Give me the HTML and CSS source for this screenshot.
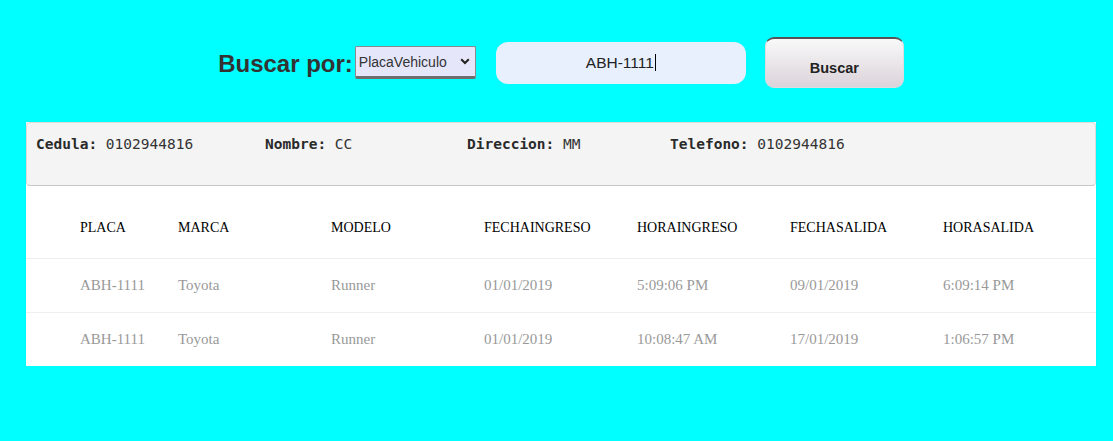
FILE: index.html
```html
<!DOCTYPE html>
<html lang="es">
<head>
<meta charset="utf-8">
<title>Buscar vehículos</title>
<link rel="stylesheet" href="styles.css">
</head>
<body>
<div class="page">
  <form class="search-bar">
    <label class="search-label" for="criterio">Buscar por:</label>
    <div class="select-wrap">
      <select id="criterio" class="search-select">
        <option>PlacaVehiculo</option>
      </select>
      <svg class="select-chevron" width="10" height="7" viewBox="0 0 10 7" aria-hidden="true">
        <path d="M1.2 1.2 L5 5 L8.8 1.2" fill="none" stroke="#222" stroke-width="2"/>
      </svg>
    </div>
    <div class="search-field"><span class="search-value">ABH-1111</span></div>
    <button type="button" class="search-button">Buscar</button>
  </form>

  <section class="result">
    <div class="owner">
      <div class="owner-item"><b>Cedula:</b> 0102944816</div>
      <div class="owner-item"><b>Nombre:</b> CC</div>
      <div class="owner-item"><b>Direccion:</b> MM</div>
      <div class="owner-item"><b>Telefono:</b> 0102944816</div>
    </div>
    <div class="table">
      <div class="row head">
        <div>PLACA</div><div>MARCA</div><div>MODELO</div><div>FECHAINGRESO</div><div>HORAINGRESO</div><div>FECHASALIDA</div><div>HORASALIDA</div>
      </div>
      <div class="row body">
        <div>ABH-1111</div><div>Toyota</div><div>Runner</div><div>01/01/2019</div><div>5:09:06 PM</div><div>09/01/2019</div><div>6:09:14 PM</div>
      </div>
      <div class="row body">
        <div>ABH-1111</div><div>Toyota</div><div>Runner</div><div>01/01/2019</div><div>10:08:47 AM</div><div>17/01/2019</div><div>1:06:57 PM</div>
      </div>
    </div>
  </section>
</div>
</body>
</html>
```

FILE: styles.css
```css
html, body {
  margin: 0;
  padding: 0;
  background: #00ffff;
}

.page {
  padding: 37px 17px 0 26px;
}

.search-bar {
  display: flex;
  justify-content: center;
  align-items: center;
  margin: 0;
  height: 51px;
}

.search-label {
  font-family: "Liberation Sans", Arial, sans-serif;
  font-weight: bold;
  font-size: 24px;
  color: #333;
  margin-right: 2px;
  position: relative;
  top: 1px;
}

.select-wrap {
  position: relative;
  margin-right: 20px;
}

.search-select {
  -webkit-appearance: none;
  appearance: none;
  box-sizing: border-box;
  width: 121px;
  height: 33px;
  margin: 0;
  padding: 0 0 0 3px;
  background: #e6e6fa;
  border: 1px solid #8a8a8a;
  border-bottom: 3px solid #6e6e6e;
  border-radius: 2px;
  font-family: "Liberation Sans", Arial, sans-serif;
  font-size: 14px;
  color: #333;
  display: block;
}

.select-chevron {
  position: absolute;
  right: 6px;
  top: 12px;
  pointer-events: none;
}

.search-field {
  box-sizing: border-box;
  width: 250px;
  height: 42px;
  background: #e8f0fe;
  border-radius: 12px;
  display: flex;
  align-items: center;
  justify-content: center;
  margin-right: 19px;
}

.search-value {
  font-family: "Liberation Sans", Arial, sans-serif;
  font-size: 15.5px;
  color: #222;
}

.search-value::after {
  content: "";
  display: inline-block;
  width: 1px;
  height: 17px;
  background: #000;
  margin-left: 1px;
  vertical-align: -3px;
}

.search-button {
  box-sizing: border-box;
  width: 139px;
  height: 51px;
  margin: 0;
  padding: 19px 0 10px;
  border: 1px solid #ddd;
  border-top: 2px solid #555;
  border-radius: 9px;
  background: linear-gradient(#f9f9f9, #dbd3da);
  font-family: "Liberation Sans", Arial, sans-serif;
  font-weight: bold;
  font-size: 14.5px;
  color: #222;
}

.result {
  margin-top: 34px;
  background: #fff;
  box-shadow: 0 1px 1px rgba(0, 0, 0, 0.12);
}

.owner {
  box-sizing: border-box;
  height: 64px;
  background: #f4f4f4;
  border: 1px solid #dcdcdc;
  border-bottom-color: #c8c8c8;
  border-radius: 4px;
  padding: 13px 0 0 9px;
  display: grid;
  grid-template-columns: 229px 202px 203px auto;
  font-family: "DejaVu Sans Mono", "Liberation Mono", monospace;
  font-size: 14.5px;
  line-height: 17px;
  color: #333;
}

.owner-item b {
  color: #2a2a2a;
}

.table {
  padding-left: 54px;
  font-family: "Liberation Serif", "Times New Roman", serif;
}

.row {
  display: grid;
  grid-template-columns: 98px repeat(6, 153px);
  line-height: 16px;
}

.row.head {
  font-size: 14px;
  color: #000;
  padding: 34px 0 22px;
}

.row.body {
  font-size: 15px;
  color: #999;
  padding: 18px 0 19px;
  border-top: 1px solid #eee;
  margin-left: -54px;
  padding-left: 54px;
}
```
